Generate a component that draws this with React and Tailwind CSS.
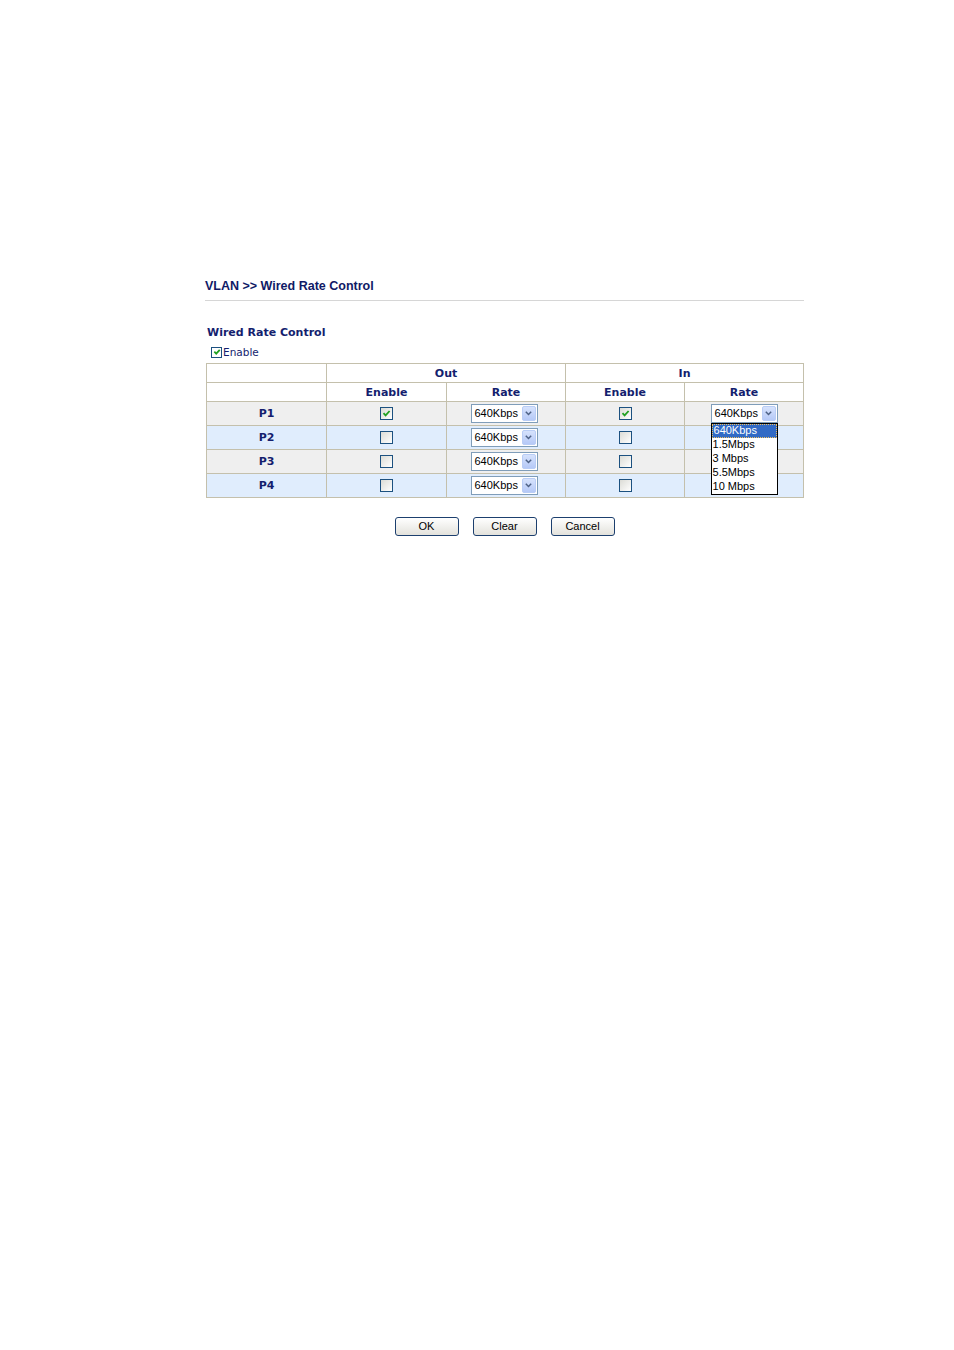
import React from "react";

const NAVY = "text-[#141e6e]";

function Check({ checked }) {
  return (
    <span className="inline-flex w-[13px] h-[13px] border border-[#1c5180] bg-gradient-to-br from-[#dcdcd6] to-[#ffffff] items-center justify-center">
      {checked && (
        <svg width="9" height="9" viewBox="0 0 9 9">
          <path d="M1.5 4.2 L3.6 6.4 L7.6 2" stroke="#21a121" strokeWidth="1.8" fill="none" />
        </svg>
      )}
    </span>
  );
}

function Select() {
  return (
    <div className="flex w-[67px] h-[19px] border border-[#7f9db9] bg-white items-center justify-between pl-[3px] pr-[1px]">
      <span className="text-[11px] text-black leading-none" style={{ fontFamily: '"Liberation Sans", Arial, sans-serif' }}>640Kbps</span>
      <span className="w-[14px] h-[15px] bg-gradient-to-b from-[#d6e2fc] to-[#b5c9f7] border border-[#b9cdf6] rounded-[2px] flex items-center justify-center">
        <svg width="7" height="5" viewBox="0 0 7 5">
          <path d="M0.8 0.8 L3.5 3.5 L6.2 0.8" stroke="#4d6185" strokeWidth="1.5" fill="none" />
        </svg>
      </span>
    </div>
  );
}

function Dropdown() {
  const items = ["640Kbps", "1.5Mbps", "3 Mbps", "5.5Mbps", "10 Mbps"];
  return (
    <div className="absolute left-0 top-[19px] w-[67px] border border-black bg-white z-10 text-left" style={{ fontFamily: '"Liberation Sans", Arial, sans-serif' }}>
      {items.map((t, i) => (
        <div
          key={t}
          className={
            "h-[14px] text-[11px] pl-[1px] " +
            (i === 0 ? "bg-[#316ac5] text-white border border-dotted border-[#f0c060] leading-[11px]" : "text-black leading-[13px]")
          }
        >
          {t}
        </div>
      ))}
    </div>
  );
}

function Btn({ children }) {
  return (
    <button
      className="w-[64px] h-[19px] border border-[#1c3f6e] rounded-[3px] bg-gradient-to-b from-[#ffffff] to-[#e3e2dc] text-[11px] text-black leading-none"
      style={{ fontFamily: '"Liberation Sans", Arial, sans-serif' }}
    >
      {children}
    </button>
  );
}

function C({ children }) {
  return <div className="h-[23px] flex items-center justify-center">{children}</div>;
}

function H({ children }) {
  return <span className="relative top-px">{children}</span>;
}

export default function App() {
  const rows = ["P1", "P2", "P3", "P4"];
  const cell = "border border-[#c4c0ac] text-center p-0";
  const head = `${cell} h-[19px] text-[11px] font-bold leading-[18px] ${NAVY}`;
  return (
    <div className="min-h-[1350px] bg-white" style={{ fontFamily: '"DejaVu Sans", Verdana, sans-serif' }}>
      <div className="pt-[278px] pl-[205px] w-[804px]">
        <div className={`text-[12.5px] font-bold leading-[16px] text-[#101a66]`} style={{ fontFamily: '"Liberation Sans", Arial, sans-serif' }}>
          VLAN &gt;&gt; Wired Rate Control
        </div>
        <div className="mt-[6px] h-px bg-[#d6d6d6]" />
        <div className={`mt-[25px] ml-[2px] text-[11px] font-bold leading-[14px] ${NAVY}`}>Wired Rate Control</div>
        <div className="mt-[6px] ml-[6px] flex items-center gap-[1px] h-[12px]">
          <span className="inline-flex w-[11px] h-[11px] border border-[#1c5180] bg-white items-center justify-center">
            <svg width="8" height="8" viewBox="0 0 9 9">
              <path d="M1.5 4.2 L3.6 6.4 L7.6 2" stroke="#21a121" strokeWidth="2" fill="none" />
            </svg>
          </span>
          <span className="text-[10.5px] text-[#141e6e] leading-none">Enable</span>
        </div>
        <table className="mt-[5px] ml-px border-collapse table-fixed w-[597px]">
          <colgroup>
            <col className="w-[120px]" />
            <col className="w-[120px]" />
            <col className="w-[119px]" />
            <col className="w-[119px]" />
            <col className="w-[119px]" />
          </colgroup>
          <tbody>
            <tr className="bg-white">
              <td className={head}></td>
              <td colSpan={2} className={head}><H>Out</H></td>
              <td colSpan={2} className={head}><H>In</H></td>
            </tr>
            <tr className="bg-white">
              <td className={head}></td>
              <td className={head}><H>Enable</H></td>
              <td className={head}><H>Rate</H></td>
              <td className={head}><H>Enable</H></td>
              <td className={head}><H>Rate</H></td>
            </tr>
            {rows.map((r, i) => (
              <tr key={r} className={i % 2 === 0 ? "bg-[#efefef]" : "bg-[#e0edfd]"}>
                <td className={`${cell} text-[11px] font-bold ${NAVY}`}><C><span className="relative top-px">{r}</span></C></td>
                <td className={cell}><C><Check checked={i === 0} /></C></td>
                <td className={cell}><C><span className="-ml-[4px]"><Select /></span></C></td>
                <td className={cell}><C><Check checked={i === 0} /></C></td>
                <td className={cell}>
                  <C>
                    {i === 0 ? (
                      <div className="relative">
                        <Select />
                        <Dropdown />
                      </div>
                    ) : null}
                  </C>
                </td>
              </tr>
            ))}
          </tbody>
        </table>
        <div className="mt-[19px] flex justify-center gap-[14px] w-[599px]">
          <Btn>OK</Btn>
          <Btn>Clear</Btn>
          <Btn>Cancel</Btn>
        </div>
      </div>
    </div>
  );
}
